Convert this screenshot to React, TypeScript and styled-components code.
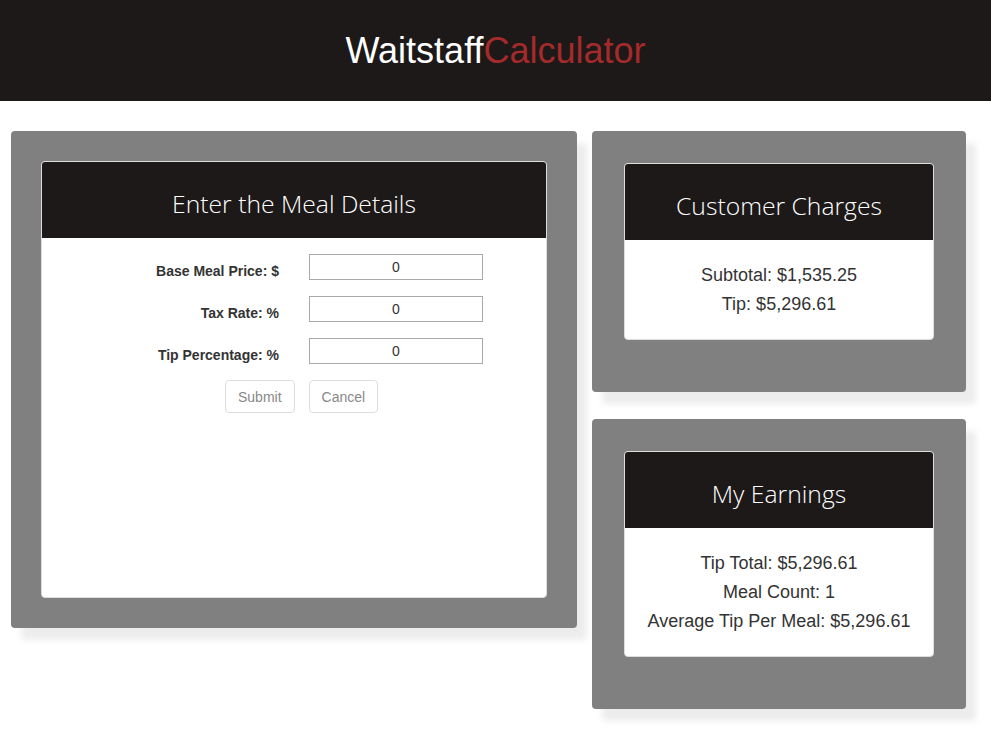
import styled, { createGlobalStyle } from "styled-components";

const Global = createGlobalStyle`
    body {
        margin: 0;
        background: #fff;
        font-family: "Liberation Sans", Arial, sans-serif;
        color: #333;
    }
    * { box-sizing: border-box; }
`;

const Header = styled.header`
    height: 101px;
    background: #1d1919;
    display: flex;
    align-items: center;
    justify-content: center;
`;
const Brand = styled.h1`
    margin: 0;
    font-size: 36px;
    font-weight: normal;
    color: #fff;
    span { color: #a52a2a; }
`;
const Main = styled.main`
    display: grid;
    grid-template-columns: 566px 374px;
    column-gap: 15px;
    align-items: start;
    padding: 30px 0 40px 11px;
`;
const Column = styled.div`
    display: flex;
    flex-direction: column;
    gap: 27px;
`;
const Panel = styled.section<{ $pad: string }>`
    background: #808080;
    border-radius: 4px;
    padding: ${p => p.$pad};
    box-shadow: 10px 12px 6px rgba(0, 0, 0, 0.075);
`;
const Card = styled.div<{ $minH?: number }>`
    background: #fff;
    border: 1px solid #ddd;
    border-radius: 4px;
    overflow: hidden;
    min-height: ${p => p.$minH ?? 0}px;
`;
const CardHead = styled.div`
    height: 77px;
    margin: -1px -1px 0;
    padding-top: 8px;
    background: #1d1919;
    display: flex;
    align-items: center;
    justify-content: center;
    color: #fff;
    font-family: "Open Sans", sans-serif;
    font-weight: 300;
    font-size: 24.7px;
`;
const Form = styled.form`
    padding: 16px 0 0;
    display: grid;
    grid-template-columns: 237px 174px;
    column-gap: 30px;
    row-gap: 16px;
    align-items: center;
`;
const Label = styled.label`
    text-align: right;
    font-weight: bold;
    font-size: 14px;
    color: #333;
    padding-top: 7px;
`;
const Input = styled.input`
    height: 26px;
    width: 174px;
    border: 1px solid #a9a9a9;
    text-align: center;
    font-family: "Liberation Sans", Arial, sans-serif;
    font-size: 14px;
    color: #333;
    padding: 0;
`;
const Buttons = styled.div`
    grid-column: 1 / 3;
    display: flex;
    gap: 14px;
    padding-left: 183px;
`;
const Button = styled.button`
    height: 33px;
    padding: 0 12px;
    background: #fff;
    border: 1px solid #ddd;
    border-radius: 4px;
    color: #888;
    font-family: "Liberation Sans", Arial, sans-serif;
    font-size: 14px;
`;
const Body = styled.div`
    padding: 21px 0 20px;
    text-align: center;
    font-size: 18px;
    line-height: 29px;
    color: #333;
`;

export default function App() {
    return (
        <>
            <Global />
            <Header>
                <Brand>Waitstaff<span>Calculator</span></Brand>
            </Header>
            <Main>
                <Panel $pad="30px">
                    <Card $minH={437}>
                        <CardHead>Enter the Meal Details</CardHead>
                        <Form onSubmit={e => e.preventDefault()}>
                            <Label>Base Meal Price: $</Label>
                            <Input defaultValue="0" />
                            <Label>Tax Rate: %</Label>
                            <Input defaultValue="0" />
                            <Label>Tip Percentage: %</Label>
                            <Input defaultValue="0" />
                            <Buttons>
                                <Button type="submit">Submit</Button>
                                <Button type="button">Cancel</Button>
                            </Buttons>
                        </Form>
                    </Card>
                </Panel>
                <Column>
                    <Panel $pad="32px 32px 52px">
                        <Card>
                            <CardHead>Customer Charges</CardHead>
                            <Body>
                                <div>Subtotal: $1,535.25</div>
                                <div>Tip: $5,296.61</div>
                            </Body>
                        </Card>
                    </Panel>
                    <Panel $pad="32px 32px 52px">
                        <Card>
                            <CardHead>My Earnings</CardHead>
                            <Body>
                                <div>Tip Total: $5,296.61</div>
                                <div>Meal Count: 1</div>
                                <div>Average Tip Per Meal: $5,296.61</div>
                            </Body>
                        </Card>
                    </Panel>
                </Column>
            </Main>
        </>
    );
}
